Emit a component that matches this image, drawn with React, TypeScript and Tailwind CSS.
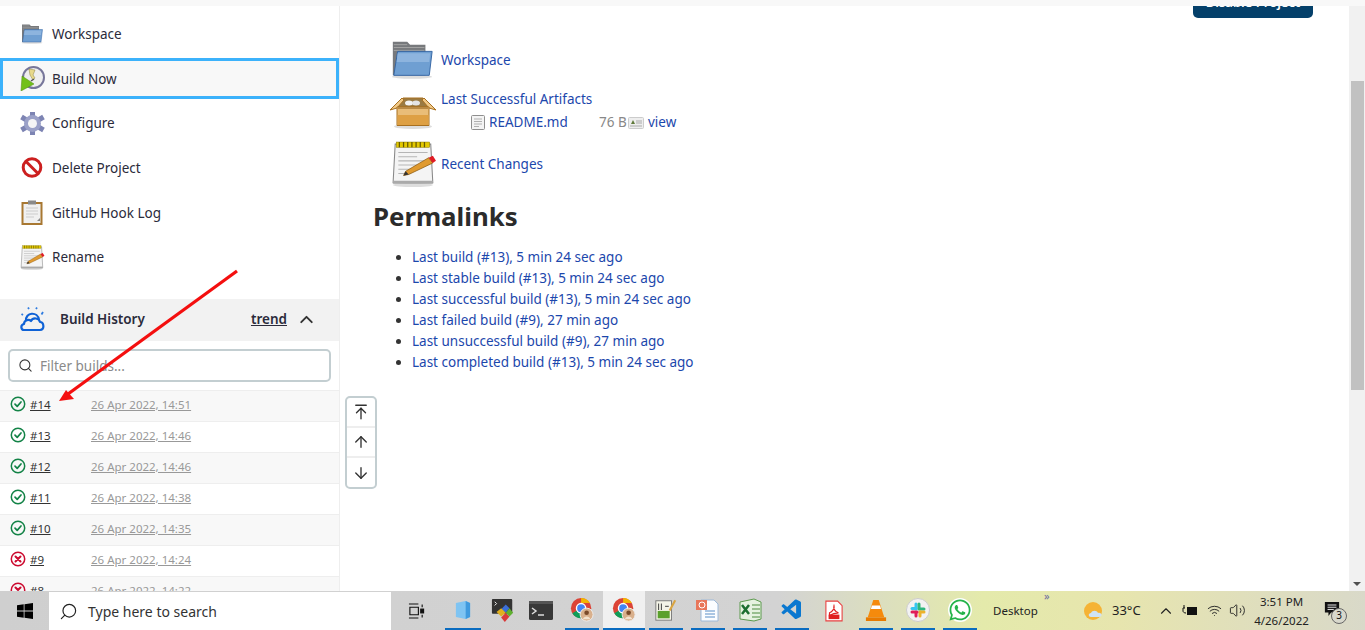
import { ArrowDown, ArrowUp, ArrowUpToLine, ChevronUp, Search, Volume2, Wifi } from "lucide-react";
import { FaWhatsapp } from "react-icons/fa";
import { VscVscode } from "react-icons/vsc";

const FolderIcon = ({ className }: { className: string }) => (
  <svg className={className} viewBox="0 0 48 40">
    <ellipse cx="24" cy="37.5" rx="21" ry="2" fill="#ddd" />
    <path d="M4 1h15l3 3h16v32H4z" fill="#77797c" />
    <path d="M5 4h14M5 7h32M5 10h32" stroke="#a5a5a5" />
    <path d="M9 11h36l-3 25H5z" fill="#6f9fd2" stroke="#3465a4" />
    <path d="M9 13h34l-1 9H8z" fill="#8db4de" />
  </svg>
);

const ClockIcon = () => (
  <svg className="h-[25px] w-[25px]" viewBox="0 0 25 25">
    <circle cx="13.5" cy="11.5" r="10.5" fill="#eee" stroke="#77769a" strokeWidth="2" />
    <path d="M9 3l6 1-2 5 2 3-2 2-3-5z" fill="#e8d98a" stroke="#8a8040" strokeWidth=".5" />
    <path d="M14 13l-3 2" stroke="#555" strokeWidth="1.500" />
    <path d="M1 25l1-15 12 8z" fill="#72c01a" stroke="#4e8a0e" strokeWidth=".5" />
  </svg>
);

const GearIcon = () => (
  <svg className="h-[25px] w-[25px]" viewBox="0 0 25 25">
    <path
      d="M12.500 1v23M1.500 6l22 13M1.500 19l22-13"
      stroke="#7d84b3"
      strokeWidth="5"
    />
    <circle cx="12.500" cy="12.500" r="8.500" fill="#9ba1c8" />
    <circle cx="12.500" cy="12.500" r="4.500" fill="#f5f5f5" />
  </svg>
);

const NoIcon = () => (
  <svg className="h-[24px] w-[24px]" viewBox="0 0 24 24">
    <circle cx="12" cy="11.5" r="8.800" fill="#fff" stroke="#cc1f1f" strokeWidth="3" />
    <path d="M6 5.500l12 12" stroke="#cc1f1f" strokeWidth="3" />
  </svg>
);

const ClipboardIcon = () => (
  <svg className="h-[25px] w-[24px]" viewBox="0 0 24 25">
    <rect x="2.500" y="3" width="19" height="21" fill="#f0f0f0" stroke="#a87832" strokeWidth="2" />
    <rect x="8" y="0.500" width="8" height="4" fill="#8a8a8a" />
    <path d="M6 8h12M6 11h12M6 14h12M6 17h8" stroke="#ccc" />
    <path d="M17 21l3-3v3z" fill="#888" />
  </svg>
);

const NotepadIcon = ({ className }: { className: string }) => (
  <svg className={className} viewBox="0 0 44 44">
    <ellipse cx="21" cy="42" rx="19" ry="2" fill="#ddd" />
    <path d="M4 3h34l2 37H2z" fill="#f4f4f4" stroke="#888" />
    <path d="M2 38h38v3H2z" fill="#aaa" />
    <rect x="5" y="1" width="32" height="5" fill="#e4c900" stroke="#8a7a00" strokeWidth=".5" />
    <path d="M8 1v5M12 1v5M16 1v5M20 1v5M24 1v5M28 1v5M32 1v5" stroke="#665a00" strokeWidth="1.200" />
    <path d="M7 11h28M7 15h18M7 19h28M7 23h26M7 27h16M7 31h12" stroke="#b5b5b5" />
    <path d="M14 29l22-13 4 5-23 11-5 1z" fill="#e09a2f" stroke="#8a5a12" strokeWidth=".7" />
    <path d="M36 16l4 5 3-2-3-5z" fill="#e01b24" />
    <path d="M14 29l-2 4 5-1z" fill="#333" />
  </svg>
);

const BoxIcon = () => (
  <svg className="h-[34px] w-[48px]" viewBox="0 0 48 34">
    <ellipse cx="24" cy="31.500" rx="19" ry="2.500" fill="#ddd" />
    <path d="M9 12l5-9h20l5 9z" fill="#9a7a42" stroke="#a87020" />
    <ellipse cx="20" cy="8" rx="4" ry="2.500" fill="#f2f2f2" />
    <ellipse cx="27" cy="8" rx="4" ry="2.500" fill="#e4e4e4" />
    <path d="M1 15L13 3l2 2-7 8zM47 15L35 3l-2 2 7 8z" fill="#f0c988" stroke="#a87020" />
    <path d="M8 12h32v18.500H8z" fill="#e9bd78" stroke="#a87020" />
    <path d="M8.500 20h31v10H8.500z" fill="#dea044" />
    <path d="M8 12h32l-1 2H9z" fill="#b98a45" />
  </svg>
);

const ViewerIcon = () => (
  <svg className="h-[14px] w-[16px]" viewBox="0 0 16 14">
    <rect x="0.500" y="1.500" width="15" height="11" rx="1" fill="#eee" stroke="#ccc" />
    <path d="M3 8l2-4 2 4z" fill="#5f7a3a" />
    <path d="M8 5h6M8 7h6M2 10h12" stroke="#aaa" />
  </svg>
);

const DocIcon = () => (
  <svg className="h-[15px] w-[14px]" viewBox="0 0 14 15">
    <rect x="0.500" y="0.500" width="13" height="14" rx="1" fill="#f4f4f4" stroke="#8f8f8f" />
    <path d="M3 4h8M3 6.500h8M3 9h8M3 11.500h5" stroke="#b0b0b0" />
  </svg>
);

const WeatherIcon = () => (
  <svg className="h-[26px] w-[26px]" viewBox="0 0 26 26" fill="none" stroke="#0f62d6" strokeWidth="2.200" strokeLinejoin="round">
    <path d="M4 24c-3 0-4-5 0-6 0-4 5-5 7-3 2-4 8-3 9 1 4 0 5 8 0 8z" />
    <path d="M6 15c-1-9 12-10 13-1" />
    <path d="M8 1.500l1 1.500M17 1.500l-1 1.500M1.500 8l1.500 1M23 6l-1.500 2.500" strokeWidth="1.800" stroke="#2f7ce0" />
  </svg>
);

const StatusOk = () => (
  <svg className="h-[16px] w-[16px]" viewBox="0 0 16 16" fill="none" stroke="#138347">
    <circle cx="8" cy="8" r="6.700" strokeWidth="1.500" />
    <path d="M5 8.200l2.200 2.200L11 6" strokeWidth="1.700" strokeLinecap="round" strokeLinejoin="round" />
  </svg>
);

const StatusFail = () => (
  <svg className="h-[16px] w-[16px]" viewBox="0 0 16 16" fill="none" stroke="#cc0a2f">
    <circle cx="8" cy="8" r="6.700" strokeWidth="1.500" />
    <path d="M5.500 5.500l5 5M10.500 5.500l-5 5" strokeWidth="2" strokeLinecap="round" />
  </svg>
);

const Chrome = () => (
  <svg className="h-[24px] w-[24px]" viewBox="0 0 26 26">
    <circle cx="12" cy="11" r="11" fill="#db4437" />
    <path d="M12 11L2.500 16.500A11 11 0 0 0 12 22a11 11 0 0 0 3-.4z" fill="#0f9d58" />
    <path d="M12 0a11 11 0 0 1 9.500 5.500H12z M12 11h9.500A11 11 0 0 1 15 21.600z" fill="#f4b400" />
    <circle cx="12" cy="11" r="5" fill="#4285f4" stroke="#fff" strokeWidth="1.500" />
    <circle cx="18" cy="18" r="7" fill="#d9b08c" stroke="#eee" />
    <circle cx="18" cy="16" r="2.500" fill="#7a4a2a" />
    <path d="M14 23c1-4 7-4 8 0z" fill="#f3e3d0" />
  </svg>
);

const taskIcons = [
  {
    key: "cube",
    w: "w-[44px]",
    line: true,
    node: (
      <svg className="h-[22px] w-[16px]" viewBox="0 0 18 22">
        <path d="M1 3l11-2 5 2v16l-5 2-11-2z" fill="#7fc4f2" />
        <path d="M12 1l5 2v16l-5 2z" fill="#3f9ade" />
      </svg>
    ),
  },
  {
    key: "puzzle",
    w: "w-[36px]",
    node: (
      <svg className="h-[24px] w-[24px]" viewBox="0 0 24 26">
        <rect x="0" y="0" width="22" height="16" rx="1" fill="#333" />
        <path d="M3 3l2 2-2 2" stroke="#fff" fill="none" />
        <path d="M10 11l5-5 4 4-4 5z" fill="#3a6fd8" />
        <path d="M5 14l5-4 5 5-5 4z" fill="#e0b020" />
        <path d="M10 20l5-5 4 4-5 6z" fill="#d93a3a" />
        <path d="M15 15l4-5 4 5-4 4z" fill="#5fb030" />
      </svg>
    ),
  },
  {
    key: "terminal",
    w: "w-[40px]",
    node: (
      <svg className="h-[19px] w-[24px]" viewBox="0 0 24 19">
        <rect width="24" height="19" rx="1.500" fill="#383838" />
        <rect width="24" height="3" fill="#555" />
        <path d="M3 7l4 3-4 3" stroke="#ddd" strokeWidth="1.500" fill="none" />
        <path d="M9 14h6" stroke="#ddd" strokeWidth="1.500" />
      </svg>
    ),
  },
  { key: "chrome1", w: "w-[42px]", node: <Chrome />, line: true },
  { key: "chrome2", w: "w-[42px]", node: <Chrome />, line: true, active: true },
  {
    key: "project",
    w: "w-[42px]",
    node: (
      <svg className="h-[24px] w-[24px]" viewBox="0 0 24 26">
        <rect x="1" y="3" width="17" height="21" fill="#f4f4e8" stroke="#777" />
        <rect x="3" y="14" width="13" height="8" fill="#5aa02c" />
        <path d="M4 6v7M7 6v7M11 9h4" stroke="#333" />
        <path d="M15 13l6-11 2 1-6 11z" fill="#d9a441" />
      </svg>
    ),
    line: true,
  },
  {
    key: "ppt",
    w: "w-[42px]",
    node: (
      <svg className="h-[24px] w-[24px]" viewBox="0 0 24 24">
        <path d="M5 2h13l4 4v17H5z" fill="#fbfdff" stroke="#9db9d8" />
        <path d="M9 13h10M9 16h10M9 19h10" stroke="#5b8fc7" />
        <rect x="0" y="2" width="11" height="10" fill="#e8765a" />
        <circle cx="6" cy="7" r="3" fill="none" stroke="#fff" />
      </svg>
    ),
    line: true,
  },
  {
    key: "excel",
    w: "w-[42px]",
    node: (
      <svg className="h-[24px] w-[24px]" viewBox="0 0 24 24">
        <path d="M2 4l14-3 7 3v17l-7 2-14-2z" fill="#e6f2e0" stroke="#5c9a4e" />
        <path d="M14 7h8M14 11h8M14 15h8M14 19h8" stroke="#4d8c3f" />
        <path d="M4 7l7 9M11 7l-7 9" stroke="#1d6f30" strokeWidth="2.500" />
      </svg>
    ),
    line: true,
  },
  { key: "vscode", w: "w-[42px]", node: <VscVscode className="h-[24px] w-[24px] text-[#0a78d0]" />, line: true },
  {
    key: "pdf",
    w: "w-[42px]",
    node: (
      <svg className="h-[24px] w-[18px]" viewBox="0 0 20 24">
        <path d="M1 1h13l5 5v17H1z" fill="#fff" stroke="#e84040" strokeWidth="1.200" />
        <path d="M5 14c3-1 6-5 5-8-1 3 1 7 5 8-3 0-7 1-10 3z" fill="none" stroke="#e02020" strokeWidth="1.300" />
        <rect x="4" y="16" width="12" height="5" fill="#e02020" />
      </svg>
    ),
  },
  {
    key: "vlc",
    w: "w-[42px]",
    node: (
      <svg className="h-[24px] w-[22px]" viewBox="0 0 24 26">
        <path d="M9 2h6l6 19H3z" fill="#f58a0c" />
        <path d="M7.500 8h9l1 4h-11z" fill="#fff" />
        <path d="M1 21h22v4H1z" fill="#e87a00" />
      </svg>
    ),
    line: true,
  },
  {
    key: "slack",
    w: "w-[42px]",
    node: (
      <svg className="h-[24px] w-[24px]" viewBox="0 0 24 24">
        <circle cx="12" cy="12" r="11.500" fill="#f2f2f2" stroke="#ccc" />
        <g strokeWidth="3" strokeLinecap="round">
          <path d="M10 6v5" stroke="#36c5f0" />
          <path d="M13 10V6" stroke="#2eb67d" />
          <path d="M13 11h5" stroke="#2eb67d" />
          <path d="M14 14h4" stroke="#ecb22e" />
          <path d="M14 14v4" stroke="#ecb22e" />
          <path d="M6 14h5" stroke="#e01e5a" />
          <path d="M10 15v3" stroke="#e01e5a" />
          <path d="M6 10.500h4" stroke="#36c5f0" />
        </g>
      </svg>
    ),
    line: true,
  },
  {
    key: "whatsapp",
    w: "w-[42px]",
    node: (
      <span className="flex h-[24px] w-[24px] items-center justify-center rounded-full bg-white">
        <FaWhatsapp className="h-[24px] w-[24px] text-[#25b34a]" />
      </span>
    ),
    line: true,
  },
];

const sideItems = [
  { label: "Workspace", icon: <FolderIcon className="h-[22px] w-[24px]" /> },
  { label: "Build Now", icon: <ClockIcon />, focus: true },
  { label: "Configure", icon: <GearIcon /> },
  { label: "Delete Project", icon: <NoIcon /> },
  { label: "GitHub Hook Log", icon: <ClipboardIcon /> },
  { label: "Rename", icon: <NotepadIcon className="h-[25px] w-[25px]" /> },
];

const builds = [
  { id: "#14", date: "26 Apr 2022, 14:51", ok: true },
  { id: "#13", date: "26 Apr 2022, 14:46", ok: true },
  { id: "#12", date: "26 Apr 2022, 14:46", ok: true },
  { id: "#11", date: "26 Apr 2022, 14:38", ok: true },
  { id: "#10", date: "26 Apr 2022, 14:35", ok: true },
  { id: "#9", date: "26 Apr 2022, 14:24", ok: false },
  { id: "#8", date: "26 Apr 2022, 14:22", ok: false },
];

const permalinks = [
  "Last build (#13), 5 min 24 sec ago",
  "Last stable build (#13), 5 min 24 sec ago",
  "Last successful build (#13), 5 min 24 sec ago",
  "Last failed build (#9), 27 min ago",
  "Last unsuccessful build (#9), 27 min ago",
  "Last completed build (#13), 5 min 24 sec ago",
];

export default function App() {
  return (
    <div className="relative flex h-[630px] w-[1365px] flex-col overflow-hidden bg-white font-['Noto_Sans',sans-serif] text-[13.5px] font-[450] text-[#333]">
      <div className="h-[6px] shrink-0 bg-[#f8f8f8]" />

      <div className="relative flex min-h-0 flex-1 overflow-hidden">
        {/* Sidebar */}
        <aside className="w-[340px] shrink-0 border-r border-[#eee]">
          <nav className="flex flex-col pt-[6px]">
            {sideItems.map((item) => (
              <div key={item.label} className="flex h-[44.600px] items-center">
                <div
                  className={
                    item.focus
                      ? "flex h-[41px] w-[339px] items-center border-[3px] border-[#3cb2fb] bg-[#f8f8f8] pl-[17px]"
                      : "flex h-[41px] w-[339px] items-center pl-[20px]"
                  }
                >
                  <span className="flex w-[32px] shrink-0 items-center">{item.icon}</span>
                  <span className="text-[#2b2b3b]">{item.label}</span>
                </div>
              </div>
            ))}
          </nav>

          <div className="mt-[19.400px] flex h-[42px] items-center bg-[#f2f2f2] pb-[1px] pl-[20px] pr-[22px]">
            <WeatherIcon />
            <span className="ml-[14px] font-semibold text-[#2b2b3b]">Build History</span>
            <span className="ml-auto font-semibold text-[#2b2b3b] underline">trend</span>
            <ChevronUp className="ml-[9px] h-[21px] w-[21px]" strokeWidth={2.200} />
          </div>

          <div className="px-[8px] pb-[8px] pt-[8.500px]">
            <div className="flex h-[33px] w-[323px] items-center rounded-[5px] border-2 border-[#c3ced1] pl-[8px] text-[#8a8a8a]">
              <Search className="h-[15px] w-[15px] text-[#333]" strokeWidth={1.700} />
              <span className="ml-[7px]">Filter builds...</span>
            </div>
          </div>

          <div className="flex flex-col">
            {builds.map((b, i) => (
              <div
                key={b.id}
                className={
                  i % 2 === 0
                    ? "flex h-[31px] shrink-0 items-center border-t border-[#eee] bg-[#f8f8f8] pb-[4px] pl-[10px]"
                    : "flex h-[31px] shrink-0 items-center border-t border-[#eee] pb-[4px] pl-[10px]"
                }
              >
                <span className="-mt-[1px] w-[20px] shrink-0">{b.ok ? <StatusOk /> : <StatusFail />}</span>
                <span className="w-[61px] shrink-0 text-[11.500px] underline">{b.id}</span>
                <span className="text-[11.500px] text-[#999] underline">{b.date}</span>
              </div>
            ))}
          </div>
        </aside>

        {/* Scroll widget */}
        <div className="absolute left-[345px] top-[390px] flex h-[93px] w-[32px] flex-col items-center rounded-[5px] border-2 border-[#c3ced1] bg-white">
          <span className="flex h-[30px] w-full items-center justify-center border-b-2 border-[#eee]">
            <ArrowUpToLine className="h-[18px] w-[18px]" strokeWidth={1.800} />
          </span>
          <span className="flex h-[30px] w-full items-center justify-center border-b-2 border-[#eee]">
            <ArrowUp className="h-[18px] w-[18px]" strokeWidth={1.800} />
          </span>
          <span className="flex flex-1 items-center justify-center">
            <ArrowDown className="h-[18px] w-[18px]" strokeWidth={1.800} />
          </span>
        </div>

        {/* Main column */}
        <main className="relative min-w-0 flex-1 pl-[33px]">
          <div className="absolute right-[36px] top-[-18px] flex h-[30px] w-[120px] items-center justify-center rounded-[5px] bg-[#04406a] text-[13px] font-semibold text-white">
            Disable Project
          </div>

          <div className="mt-[34px] flex h-[40px] items-center pl-[16px] text-[#1c47ac]">
            <FolderIcon className="h-[40px] w-[46px] shrink-0" />
            <span className="ml-[6px]">Workspace</span>
          </div>

          <div className="mt-[8px] flex h-[48px] pl-[16px]">
            <span className="flex w-[52px] shrink-0 pt-[7px]">
              <BoxIcon />
            </span>
            <div className="text-[#1c47ac]">
              <div className="h-[23px] leading-[22px]">Last Successful Artifacts</div>
              <div className="ml-[30px] flex h-[23px] items-center">
                <DocIcon />
                <span className="ml-[4px] w-[110px]">README.md</span>
                <span className="w-[29px] text-[#888]">76 B</span>
                <ViewerIcon />
                <span className="ml-[4px]">view</span>
              </div>
            </div>
          </div>

          <div className="mt-[4px] flex h-[48px] items-center pl-[18px] text-[#1c47ac]">
            <NotepadIcon className="h-[46px] w-[46px] shrink-0" />
            <span className="ml-[4px]">Recent Changes</span>
          </div>

          <h1 className="mt-[8px] h-[40px] text-[25.800px] font-bold leading-[40px] text-[#2b2b2b]">Permalinks</h1>

          <ul className="mt-[11px] flex list-disc flex-col pl-[39px] text-[#1c47ac] marker:text-[#333]">
            {permalinks.map((p) => (
              <li key={p} className="h-[21px] leading-[21px]">
                {p}
              </li>
            ))}
          </ul>
        </main>

        {/* Page scrollbar */}
        <div className="relative w-[16px] shrink-0 bg-[#f1f1f1] pl-[2px] pt-[75px]">
          <div className="h-[309px] w-[13px] bg-[#c1c1c1]" />
          <div className="absolute bottom-[5px] left-[4px] h-0 w-0 border-x-[4px] border-t-[4px] border-x-transparent border-t-[#505050]" />
        </div>
      </div>

      {/* Taskbar */}
      <footer className="flex h-[39px] shrink-0 items-center bg-[linear-gradient(90deg,#cfcfcf_0%,#d3d3d3_57%,#e4eaab_72%,#e7e5ae_82%,#d9d9c9_100%)]">
        <div className="flex h-full w-[49px] shrink-0 items-center justify-center">
          <svg className="h-[16px] w-[16px]" viewBox="0 0 16 16" fill="#000">
            <path d="M0 2.300l6.700-1v6.300H0zM7.500 1.200L16 0v7.600H7.500zM0 8.400h6.700v6.300L0 13.700zM7.500 8.400H16V16l-8.500-1.200z" />
          </svg>
        </div>
        <div className="flex h-[38px] w-[342px] shrink-0 items-center self-end bg-white pl-[10px]">
          <Search className="h-[19px] w-[19px] -scale-x-100 text-[#222]" strokeWidth={1.500} />
          <span className="ml-[10px] text-[14px] text-[#333]">Type here to search</span>
        </div>
        <div className="flex w-[50px] shrink-0 justify-center">
          <svg className="h-[16px] w-[17px]" viewBox="0 0 18 16" fill="none" stroke="#111" strokeWidth="1.200">
            <path d="M1 .6h10M1 15.400h10M2 4h9v8H2z" />
            <path d="M15 1v3M15 12v3" />
            <rect x="13.500" y="6" width="3" height="4" fill="#111" />
          </svg>
        </div>
        <div className="flex h-full items-stretch">
          {taskIcons.map((t) => (
            <div key={t.key} className={t.active ? `${t.w} h-full bg-[#f0f0f0]` : `${t.w} h-full px-[4px]`}>
              <div
                className={
                  t.line
                    ? "flex h-full items-center justify-center border-b-2 border-[#0a6cc0]"
                    : "flex h-full items-center justify-center"
                }
              >
                {t.node}
              </div>
            </div>
          ))}
        </div>
        <div className="relative ml-[12px] flex w-[91px] shrink-0 text-[11.500px] text-[#222]">
          Desktop
          <span className="absolute -top-[14px] left-[51px] text-[11px] text-[#6c6ca0]">»</span>
        </div>
        <svg className="h-[20px] w-[22px] shrink-0" viewBox="0 0 22 20">
          <circle cx="9" cy="10" r="9" fill="#f5b335" />
          <path d="M7 16c-3 0-3-4 0-4 1-3 6-3 7 0 4-1 5 4 1 4z" fill="#cfe3f5" />
        </svg>
        <span className="ml-[6px] w-[38px] shrink-0 text-[13px] text-[#222]">33°C</span>
        <ChevronUp className="ml-[7px] h-[18px] w-[18px] shrink-0 text-[#222]" strokeWidth={1.500} />
        <svg className="ml-[7px] h-[12px] w-[16px] shrink-0" viewBox="0 0 16 12" fill="#111">
          <path d="M1 3h2M2 0v3M1 3v3c0 1 1 2 3 2" fill="none" stroke="#111" />
          <rect x="5" y="2" width="10" height="8" />
        </svg>
        <Wifi className="ml-[9px] h-[15px] w-[15px] shrink-0 text-[#222]" strokeWidth={1.500} />
        <Volume2 className="ml-[7px] h-[17px] w-[17px] shrink-0 text-[#222]" strokeWidth={1.300} />
        <div className="ml-[4px] flex w-[63px] shrink-0 flex-col items-center text-[11.500px] leading-[19px] text-[#222]">
          <span>3:51 PM</span>
          <span>4/26/2022</span>
        </div>
        <div className="relative ml-[11px] h-[20px] w-[20px] shrink-0">
          <svg className="h-[16px] w-[16px]" viewBox="0 0 18 18" fill="#111">
            <path d="M1 1h16v12H8l-3 4v-4H1z" />
            <path d="M4 4.500h10M4 7h10M4 9.500h7" stroke="#fff" />
          </svg>
          <span className="absolute left-[7px] top-[7px] flex h-[16px] w-[16px] items-center justify-center rounded-full border border-[#666] bg-[#d8d8cc] text-[10px] text-[#111]">
            3
          </span>
        </div>
      </footer>

      {/* Red annotation arrow drawn on the screenshot */}
      <svg className="pointer-events-none absolute left-0 top-0 h-[630px] w-[1365px]" viewBox="0 0 1365 630">
        <path d="M237 271L68 394" stroke="#f40f0f" strokeWidth="3.200" />
        <path d="M59 401l7-11 8 9z" fill="#f40f0f" />
      </svg>
    </div>
  );
}
